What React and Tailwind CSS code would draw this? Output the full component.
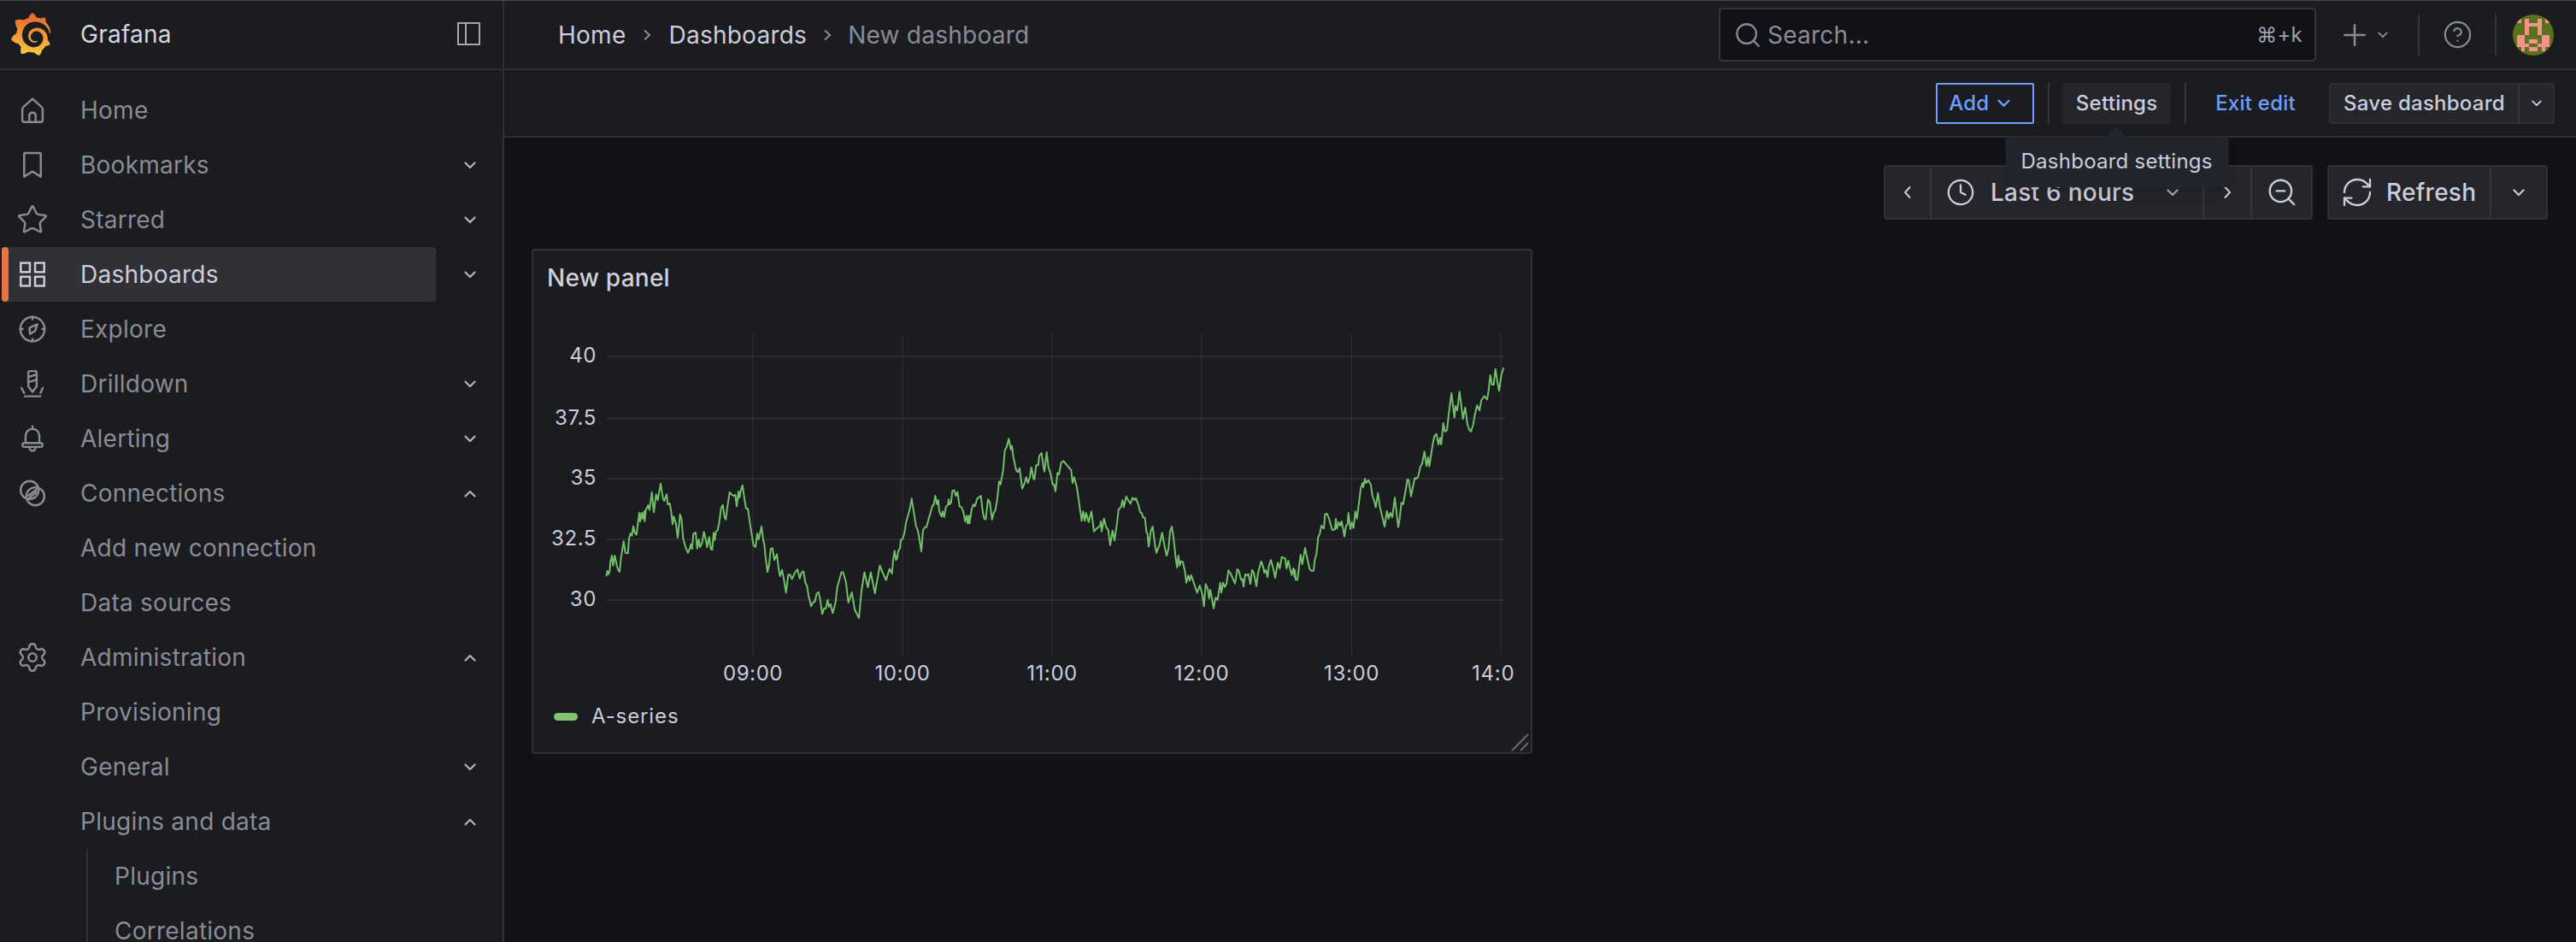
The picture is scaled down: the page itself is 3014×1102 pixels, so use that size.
import React from 'react';
import { SiGrafana } from 'react-icons/si';
import { Star, Settings, Search, Plus, ZoomOut, Clock, RefreshCw, CircleHelp } from 'lucide-react';

const S1 = [[13,357],[17,338],[21,350],[25,340],[28,305],[33,285],[37,320],[43,285],[50,320],[55,335],[60,342],[65,290],[70,262],[74,235],[80,275],[89,277],[93,225],[98,207],[103,215],[108,182],[113,205],[119,212],[125,165],[129,135],[132,165],[137,135],[141,155],[146,130],[148,165],[152,125],[160,108],[165,125],[173,63],[180,133],[188,70],[194,90],[204,32],[212,85],[217,93],[225,70],[229,105],[236,102],[241,130],[246,175],[250,148],[257,170],[264,222],[272,140],[277,155],[283,225],[292,257],[300,275],[307,258],[310,245],[314,262],[319,208],[327,204],[332,260],[338,228],[342,255],[349,242],[356,202],[362,228],[367,255],[374,220],[380,260],[385,265],[390,205],[394,230],[398,200],[404,196],[410,165],[416,118],[422,107],[428,150],[433,158],[438,115],[446,63],[452,70],[460,75],[466,72],[471,112],[477,60],[481,82],[485,58],[491,38],[498,85],[504,120],[510,120],[515,155],[522,200],[530,250],[537,255],[543,207],[548,228],[558,183],[564,230],[568,245],[572,290],[579,342],[585,315],[590,262],[596,258],[603,300],[612,280],[618,330],[623,357],[630,335],[637,370],[644,415],[652,352],[658,352],[665,367],[675,345],[684,333],[692,365],[698,345],[705,340],[712,380],[718,392],[723,425],[732,463],[738,450],[745,447],[752,418],[758,413],[765,445],[771,490],[778,470],[784,470],[790,440],[795,465],[800,455],[808,487]];
const PAGE = [[977.6,705],[979.6,687],[984.5,669.5],[986.5,669.5],[989.8,681],[992.6,705],[996.7,693],[1000,713],[1005,723],[1008,691],[1011.4,669.5],[1015.5,687],[1018.8,669.5],[1023.7,694],[1029.4,661.6],[1032.6,669.5],[1036.7,678.6],[1040.8,665.5],[1043.7,671]];
const S2 = [[210,450],[215,418],[220,450],[224,445],[228,418],[234,410],[237,380],[243,377],[250,355],[255,320],[262,295],[270,265],[275,235],[282,280],[290,330],[296,345],[302,375],[309,420],[315,345],[322,335],[327,335],[335,305],[348,260],[353,255],[358,225],[364,255],[368,240],[372,280],[380,298],[384,280],[389,300],[395,265],[403,255],[405,238],[408,255],[413,250],[418,208],[424,205],[430,225],[436,212],[443,262],[450,265],[456,280],[463,315],[468,295],[472,322],[476,295],[478,322],[486,270],[492,255],[497,262],[505,235],[512,230],[518,225],[525,285],[530,305],[535,308],[543,238],[550,250],[557,308],[563,285],[568,278],[575,240],[582,175],[587,185],[596,135],[602,65],[608,55],[616,25],[623,62],[627,50],[632,90],[642,135],[648,142],[654,128],[663,200],[670,185],[677,160],[683,180],[690,160],[695,125],[703,165],[706,168],[712,118],[719,118],[723,85],[731,75],[737,120],[741,140],[749,72],[755,125],[762,145],[770,185],[775,185],[780,210],[787,145],[792,150],[800,108],[808,103]];
const S3 = [[25,0],[30,45],[35,25],[45,60],[55,130],[62,178],[67,145],[73,178],[77,150],[82,165],[86,182],[96,145],[105,215],[112,208],[120,200],[127,195],[129,180],[132,215],[140,170],[148,200],[155,210],[162,263],[170,212],[177,247],[187,178],[191,138],[200,130],[205,105],[210,130],[218,92],[225,105],[233,118],[240,97],[247,105],[252,98],[262,125],[267,148],[272,150],[277,165],[284,168],[289,215],[293,225],[297,268],[305,210],[311,198],[318,255],[324,290],[335,262],[344,220],[352,262],[360,300],[366,280],[372,215],[378,198],[384,235],[392,310],[397,342],[401,300],[406,335],[410,320],[417,322],[425,360],[429,395],[436,370],[441,388],[446,368],[455,395],[467,430],[476,405],[485,435],[491,477],[497,400],[504,415],[509,450],[513,420],[518,445],[525,485],[532,448],[539,455],[548,395],[552,430],[558,395],[564,410],[570,400],[577,352],[583,360],[590,375],[600,398],[608,348],[614,355],[621,385],[626,382],[630,408],[636,365],[642,370],[647,365],[654,400],[660,350],[666,360],[675,408],[681,360],[692,320],[699,340],[703,360],[708,350],[714,375],[719,335],[726,315],[734,345],[741,378],[750,325],[757,345],[764,305],[771,308],[776,310],[781,345],[787,318],[793,345],[799,368],[805,345],[809,375]];
const S4 = [[0,725],[3,760],[9,760],[14,720],[20,672],[26,705],[36,648],[42,678],[52,722],[58,728],[66,728],[70,690],[76,670],[82,610],[88,597],[93,570],[102,580],[106,530],[113,528],[120,545],[131,585],[141,583],[144,546],[148,580],[154,558],[160,570],[164,555],[170,585],[174,608],[180,570],[185,565],[188,525],[195,582],[200,558],[206,578],[212,520],[218,545],[225,490],[232,435],[238,420],[240,435],[246,405],[250,420],[258,410],[267,427],[272,465],[278,480],[284,505],[292,455],[298,500],[306,535],[315,573],[323,518],[329,545],[335,525],[342,540],[351,472],[356,515],[363,575],[368,545],[374,490],[380,495],[390,440],[395,408],[400,410],[408,467],[416,425],[421,403],[427,405],[433,398],[440,365],[447,352],[455,310],[462,360],[468,330],[472,362],[477,330],[483,290],[490,255],[497,248],[504,285],[510,262],[514,285],[521,210],[527,240],[534,235],[540,180],[550,105],[560,190],[564,150],[570,165],[578,100],[590,195],[598,155],[606,215],[612,232],[618,240],[626,215],[632,180],[640,148],[648,165],[655,130],[665,115],[675,127],[680,95],[686,42],[692,75],[698,75],[704,20],[710,60],[717,97],[725,40],[733,15]];
const map = (arr, x0, y0) => arr.map(([x, y]) => [x0 + x / 3, y0 + y / 3]);
const linePts = [...map(S1, 705, 555), ...PAGE, ...map(S2, 975, 505), ...map(S3, 1245, 550), ...map(S4, 1515, 425)]
  .map(([x, y]) => `${x.toFixed(1)},${y.toFixed(1)}`).join(' ');

const Svg = ({ children, className = 'w-8 h-8' }) => (
  <svg viewBox="1.5 1.5 21 21" fill="none" stroke="currentColor" strokeWidth="1.6" strokeLinecap="round" strokeLinejoin="round" className={className}>{children}</svg>
);
const HomeI = () => <Svg><path d="M12 3.2 5.2 9.3Q4.2 10.2 4.2 11.5V19.5Q4.2 21 5.7 21H18.3Q19.8 21 19.8 19.5V11.5Q19.8 10.2 18.8 9.3Z" /><path d="M9.6 21V16Q9.6 13.8 12 13.8T14.4 16V21" /></Svg>;
const BookmarkI = () => <Svg><path d="M6.6 2.8H17.4Q18.4 2.8 18.4 3.8V21L12 17 5.6 21V3.8Q5.6 2.8 6.6 2.8Z" /></Svg>;
const AppsI = () => <Svg><g strokeLinecap="butt" strokeLinejoin="miter"><rect x="3" y="3.2" width="7" height="7" /><rect x="14" y="3.2" width="7" height="7" /><rect x="3" y="13.8" width="7" height="7" /><rect x="14" y="13.8" width="7" height="7" /></g></Svg>;
const CompassI = () => <Svg><circle cx="12" cy="12" r="9.3" /><path d="M12 2.7v1.7M12 19.6v1.7M2.7 12h1.7M19.6 12h1.7" /><path d="M15.7 8.3 14 13.5 10 15.7 9.8 11Z" /></Svg>;
const DrillI = () => <Svg><path d="M8.8 3.5Q8.8 2.2 10.2 2.2H13.8Q15.2 2.2 15.2 3.5V14L12 18.3 8.8 14Z" /><path d="M8.8 6.8 15.2 4.8M8.8 10.8 15.2 8.8" /><path d="M3.5 15.1 5.6 19M19.9 15.1 18.1 19M6.1 21.6H18.1" /></Svg>;
const BellI = () => <Svg><path d="M12 2.6V4.3M6.7 15.5V9.9a5.3 5.3 0 0 1 10.6 0V15.5" /><rect x="4.4" y="15.5" width="15.2" height="3" rx="1.2" /><path d="M9.5 18.5q.4 3 2.5 3t2.5-3" /></Svg>;
const ConnI = () => <Svg><circle cx="9.8" cy="9.6" r="6.9" /><circle cx="14.2" cy="14.4" r="6.9" /><path d="M9 13.8l6.4-5M9 16.2l6-5" /></Svg>;
const Cog = () => <Settings className="w-[38px] h-[38px] -m-[3px]" strokeWidth={1.55} />;
const StarI = () => <Star className="w-[38px] h-[38px] -m-[3px]" strokeWidth={1.55} />;

const Chevron = ({ up, className = 'w-[14px] h-[9px]' }) => (
  <svg viewBox="0 0 14 9" fill="none" stroke="currentColor" strokeWidth="2.2" strokeLinecap="round" strokeLinejoin="round" className={className}>
    <path d={up ? 'M1.5 7.5 7 2l5.5 5.5' : 'M1.5 1.5 7 7l5.5-5.5'} />
  </svg>
);

const NavRow = ({ icon: I, label, chevron, active }) => (
  <div className="flex items-center h-16 relative">
    {active && <div className="absolute left-[2px] top-0 w-2 h-16 rounded-sm bg-[#e9743f]" />}
    <div className={`flex items-center ml-[2px] w-[508px] h-16 rounded-[4px] pl-5 ${active ? 'bg-[#2f3137] text-[#ccccdc]' : 'text-[#8a8b96]'}`}>
      <div className="w-8 h-8 shrink-0">{I && <I />}</div>
      <span className="ml-[40px] text-[28px]">{label}</span>
    </div>
    {chevron && <div className="ml-[33px] text-[#b4b4c0] flex"><Chevron up={chevron === 'up'} /></div>}
  </div>
);

const SubRow = ({ label }) => (
  <div className="h-16 flex items-center text-[28px] text-[#8a8b96]">{label}</div>
);

const Avatar = () => {
  const cells = [
    [1,1],[8,1],[3,1],[6,1],[3,2],[4,2],[5,2],[6,2],[3,3],[6,3],[3,4],[6,4],
    [1,5],[2,5],[7,5],[8,5],[1,6],[2,6],[4,6],[5,6],[7,6],[8,6],[1,7],[2,7],[3,7],[6,7],[7,7],[8,7],[2,8],[4,8],[5,8],[7,8],
  ];
  return (
    <svg viewBox="0 0 10 10" className="w-12 h-12 rounded-full bg-[#5a701f]" shapeRendering="crispEdges">
      {cells.map(([x, y]) => <rect key={`${x}-${y}`} x={x} y={y} width="1" height="1" fill="#f0948a" />)}
    </svg>
  );
};

const VDiv = ({ className = 'h-12' }) => <div className={`w-[2px] bg-[#33353a] ${className}`} />;

export default function App() {
  const gridY = [417, 489.6, 560, 631, 702];
  const gridX = [881, 1056, 1231, 1406, 1581.5, 1756];
  const ylabels = [['40', 417], ['37.5', 489.6], ['35', 560], ['32.5', 631], ['30', 702]];
  const xlabels = [['09:00', 881], ['10:00', 1056], ['11:00', 1231], ['12:00', 1406], ['13:00', 1581.5]];
  return (
    <div className="w-[3014px] h-[1102px] overflow-hidden flex flex-col font-[Inter,sans-serif] tracking-[0.25px] bg-[#111217] text-[#ccccdc]">
      <div className="h-px bg-[#44464a] shrink-0" />
      <div className="flex flex-1 min-h-0">
        {/* Sidebar */}
        <aside className="w-[590px] shrink-0 bg-[#1a1c20] border-r-2 border-[#2e3035] flex flex-col overflow-hidden">
          <div className="h-[81px] shrink-0 border-b-2 border-[#2e3035] flex items-center pb-[2px]">
            <svg width="0" height="0" className="absolute">
              <defs>
                <linearGradient id="gf" x1="0" y1="0" x2="0" y2="1">
                  <stop offset="0" stopColor="#e8622f" />
                  <stop offset="1" stopColor="#f8cc3a" />
                </linearGradient>
              </defs>
            </svg>
            <div className="ml-[11px] w-[50px] h-[50px] flex">
              <SiGrafana size={50} fill="url(#gf)" />
            </div>
            <span className="ml-[33px] text-[28px] text-[#d5d5e0]">Grafana</span>
            <svg viewBox="0 0 27 27" className="ml-auto mr-[26px] w-[27px] h-[27px] text-[#a6a6b2]" fill="none" stroke="currentColor" strokeWidth="2">
              <rect x="1" y="1" width="25" height="25" />
              <path d="M10 1v25" />
            </svg>
          </div>
          <nav className="pt-[15px]">
            <NavRow icon={HomeI} label="Home" />
            <NavRow icon={BookmarkI} label="Bookmarks" chevron="down" />
            <NavRow icon={StarI} label="Starred" chevron="down" />
            <NavRow icon={AppsI} label="Dashboards" chevron="down" active />
            <NavRow icon={CompassI} label="Explore" />
            <NavRow icon={DrillI} label="Drilldown" chevron="down" />
            <NavRow icon={BellI} label="Alerting" chevron="down" />
            <NavRow icon={ConnI} label="Connections" chevron="up" />
            <NavRow label="Add new connection" />
            <NavRow label="Data sources" />
            <NavRow icon={Cog} label="Administration" chevron="up" />
            <NavRow label="Provisioning" />
            <NavRow label="General" chevron="down" />
            <NavRow label="Plugins and data" chevron="up" />
            <div className="ml-[101px] border-l-2 border-[#2e3035] pl-[31px]">
              <SubRow label="Plugins" />
              <SubRow label="Correlations" />
            </div>
          </nav>
        </aside>

        {/* Main */}
        <main className="flex-1 min-w-0 flex flex-col">
          <header className="h-[81px] shrink-0 bg-[#1a1c20] border-b-2 border-[#2e3035] flex items-center pr-[26px]">
            <div className="flex items-center text-[28px] ml-[63px]">
              <span className="text-[#ccccdc]">Home</span>
              <svg viewBox="0 0 10 14" className="w-[10px] h-[14px] mx-[20px] text-[#8a8b96]" fill="none" stroke="currentColor" strokeWidth="2"><path d="M2 1.5 8 7l-6 5.5" /></svg>
              <span className="text-[#ccccdc]">Dashboards</span>
              <svg viewBox="0 0 10 14" className="w-[10px] h-[14px] mx-[19px] text-[#8a8b96]" fill="none" stroke="currentColor" strokeWidth="2"><path d="M2 1.5 8 7l-6 5.5" /></svg>
              <span className="text-[#8a8b96]">New dashboard</span>
            </div>
            <div className="ml-auto w-[699px] h-[63px] bg-[#111217] border-2 border-[#33353a] rounded-[4px] flex items-center pl-[15px] pr-[14px]">
              <Search className="w-[34px] h-[34px] text-[#8a8b96]" strokeWidth={1.6} />
              <span className="ml-[6px] text-[28px] text-[#8a8b96]">Search...</span>
              <span className="ml-auto text-[24px] text-[#a0a0ac]">⌘+k</span>
            </div>
            <Plus className="ml-[25px] w-10 h-10 text-[#8a8b96]" strokeWidth={1.5} />
            <div className="ml-[7px] mr-[35px] text-[#8a8b96] flex"><Chevron className="w-[12px] h-[8px]" /></div>
            <VDiv />
            <CircleHelp className="ml-[27px] mr-[26px] w-[35px] h-[35px] text-[#8a8b96]" strokeWidth={1.5} />
            <VDiv />
            <div className="ml-[19px] flex"><Avatar /></div>
          </header>

          <div className="h-[79px] shrink-0 bg-[#1a1c20] border-b-2 border-[#2e3035] flex items-center justify-end pr-[25px] text-[24px] font-medium">
            <div className="w-[115px] h-12 border-2 border-[#6e9fff] rounded-[2px] flex items-center pl-[13px] gap-[10px] text-[#6e9fff]">
              Add <Chevron className="w-[15px] h-[10px]" />
            </div>
            <VDiv className="h-12 ml-[16px] mr-[15px]" />
            <div className="relative">
              <div className="w-[127px] h-12 bg-[#24262c] rounded-[4px] flex items-center justify-center text-[#ccccdc]">Settings</div>
              <div className="absolute top-full left-1/2 -translate-x-1/2 mt-[15px] w-[261px] h-[59px] bg-[#22252b] rounded-[3px] shadow-lg flex items-center justify-center font-normal text-[#ccccdc] whitespace-nowrap z-10">
                Dashboard settings
                <div className="absolute bottom-full left-1/2 -translate-x-1/2 w-0 h-0 border-x-[12px] border-x-transparent border-b-[12px] border-b-[#22252b]" />
              </div>
            </div>
            <VDiv className="h-12 ml-[16px] mr-[34px]" />
            <span className="text-[#6e9fff]">Exit edit</span>
            <div className="ml-[39px] flex h-12 bg-[#24262c] border-2 border-[#2e3035] rounded-[4px]">
              <div className="w-[219px] flex items-center justify-center text-[#ccccdc]">Save dashboard</div>
              <div className="w-[41px] border-l-2 border-[#34363b] flex items-center justify-center text-[#ccccdc]"><Chevron className="w-[12px] h-[8px]" /></div>
            </div>
          </div>

          <div className="flex-1 min-h-0 pt-[32px] pl-[32px] pr-[33px]">
            <div className="flex justify-end gap-[17px] text-[28px] font-medium text-[#ccccdc]">
              <div className="flex h-16 bg-[#24262c] border-2 border-[#2e3035] rounded-[4px] divide-x-2 divide-[#34363b]">
                <div className="w-[54px] flex items-center justify-center"><svg viewBox="0 0 10 16" className="w-[10px] h-[16px]" fill="none" stroke="currentColor" strokeWidth="2"><path d="M8 1.5 2 8l6 6.5" /></svg></div>
                <div className="w-[319px] flex items-center pl-[17px] pr-[28px]">
                  <Clock className="w-[34px] h-[34px] shrink-0" strokeWidth={1.6} />
                  <span className="ml-[18px]">Last 6 hours</span>
                  <div className="ml-auto text-[#a6a6b2] flex"><Chevron className="w-[14px] h-[9px]" /></div>
                </div>
                <div className="w-[56px] flex items-center justify-center"><svg viewBox="0 0 10 16" className="w-[10px] h-[16px]" fill="none" stroke="currentColor" strokeWidth="2"><path d="M2 1.5 8 8l-6 6.5" /></svg></div>
                <div className="w-[69px] flex items-center justify-center"><ZoomOut className="w-[38px] h-[38px]" strokeWidth={1.5} /></div>
              </div>
              <div className="flex h-16 bg-[#24262c] border-2 border-[#2e3035] rounded-[4px] divide-x-2 divide-[#34363b]">
                <div className="w-[190px] flex items-center pl-[13px]">
                  <RefreshCw className="w-10 h-10" strokeWidth={1.4} />
                  <span className="ml-[14px]">Refresh</span>
                </div>
                <div className="w-16 flex items-center justify-center"><Chevron className="w-[14px] h-[9px]" /></div>
              </div>
            </div>

            <section className="relative mt-[34px] w-[1171px] h-[591px] bg-[#1a1c20] border-2 border-[#2e3035] rounded-[4px]">
              <div className="pt-[14px] pl-[16px] text-[28px] leading-[36px] font-medium text-[#d0d0dc]">New panel</div>
              <svg viewBox="624 380 1167 425" className="block w-[1167px] h-[425px] mt-[37px] font-[Inter,sans-serif]">
                {gridY.map(y => <line key={y} x1="710" x2="1761" y1={y} y2={y} stroke="#ccccdc" strokeOpacity="0.12" strokeWidth="1.5" />)}
                {gridX.map(x => <line key={x} x1={x} x2={x} y1="390" y2="767" stroke="#ccccdc" strokeOpacity="0.12" strokeWidth="1" />)}
                <polyline points={linePts} fill="none" stroke="#73bf69" strokeWidth="2" strokeLinejoin="round" />
                {ylabels.map(([t, y]) => <text key={t} x="698" y={y + 7} textAnchor="end" fontSize="24" fill="#ccccdc" letterSpacing="0.6">{t}</text>)}
                {xlabels.map(([t, x]) => <text key={t} x={x} y="796" textAnchor="middle" fontSize="24" fill="#ccccdc" letterSpacing="0.6">{t}</text>)}
                <text x="1722" y="796" fontSize="24" fill="#ccccdc" letterSpacing="0.8">14:0</text>
              </svg>
              <div className="mt-[15px] ml-[24px] h-9 flex items-center text-[24px] tracking-[0.9px] text-[#ccccdc]">
                <div className="w-7 h-[9px] rounded-full bg-[#84c274]" />
                <span className="ml-[16px]">A-series</span>
              </div>
              <svg viewBox="0 0 22 22" className="absolute right-[1px] bottom-[1px] w-[22px] h-[22px]" stroke="#6a6b72" strokeWidth="2" fill="none">
                <path d="M1 21 20 2M11 21l9-9" />
              </svg>
            </section>
          </div>
        </main>
      </div>
    </div>
  );
}
